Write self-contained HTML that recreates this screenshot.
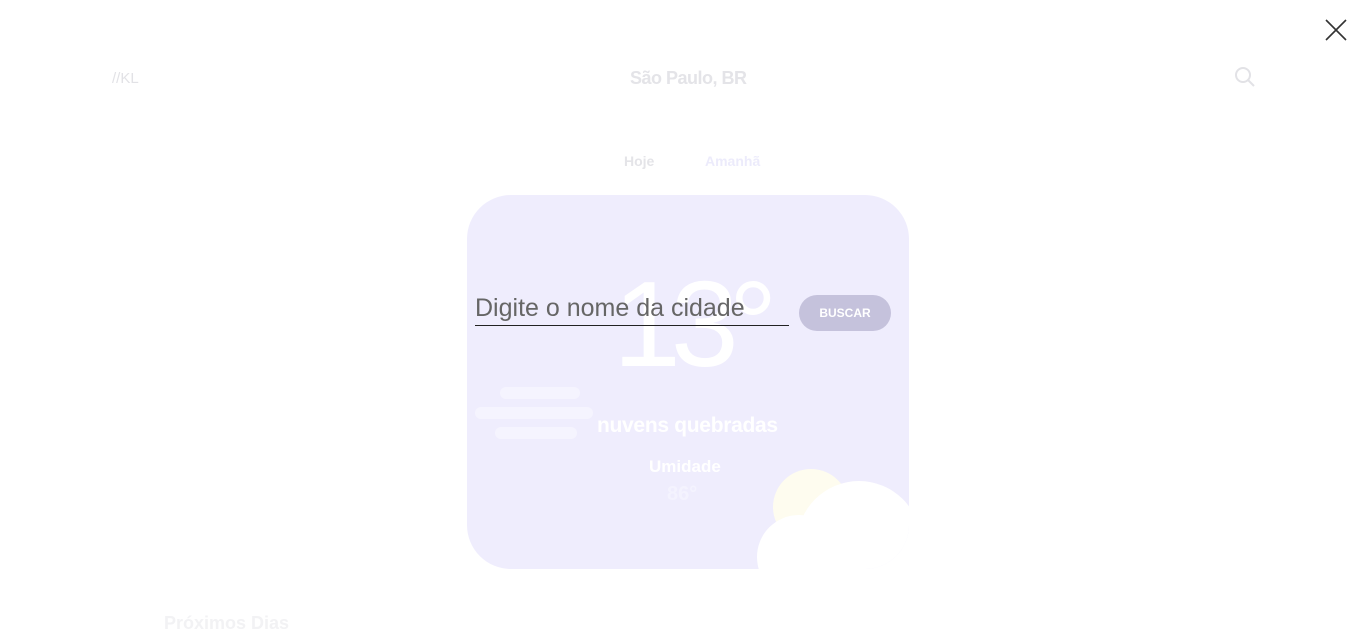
<!DOCTYPE html>
<html><head><meta charset="utf-8"><style>
body{margin:0;width:1366px;height:624px;overflow:hidden;background:#fff;font-family:"Liberation Sans",sans-serif;position:relative}
.a{position:absolute;white-space:nowrap}
</style></head><body>
<svg class="a" style="left:1325px;top:19px" width="22" height="22" viewBox="0 0 22 22"><path d="M1 1L21 21M21 1L1 21" stroke="#333" stroke-width="1.6"/></svg>
<div class="a" style="left:112px;top:70px;font-size:15px;color:#e2e2e6">//KL</div>
<div class="a" style="left:630px;top:68px;font-size:18px;font-weight:bold;color:#e4e4e8;letter-spacing:-0.5px">São Paulo, BR</div>
<svg class="a" style="left:1234px;top:66px" width="22" height="22" viewBox="0 0 22 22"><circle cx="9" cy="9" r="7" fill="none" stroke="#e2e2e6" stroke-width="2"/><path d="M14 14L20 20" stroke="#e2e2e6" stroke-width="2"/></svg>
<div class="a" style="left:624px;top:153px;font-size:14px;font-weight:bold;color:#e4e4e8">Hoje</div>
<div class="a" style="left:705px;top:153px;font-size:14px;font-weight:bold;color:#ecebfb">Amanhã</div>
<div class="a" style="left:467px;top:195px;width:442px;height:374px;background:#efedfd;border-radius:44px;overflow:hidden">
 <div class="a" style="left:146px;top:68px;font-size:122px;color:#fff;line-height:1;letter-spacing:-10px">13°</div>
 <div class="a" style="left:8px;top:192px;width:118px;height:56px">
  <div class="a" style="left:25px;top:0;width:80px;height:12px;background:#f5f4fe;border-radius:6px"></div>
  <div class="a" style="left:0;top:20px;width:118px;height:12px;background:#f5f4fe;border-radius:6px"></div>
  <div class="a" style="left:20px;top:40px;width:82px;height:12px;background:#f5f4fe;border-radius:6px"></div>
 </div>
 <div class="a" style="left:130px;top:219px;font-size:21px;font-weight:bold;color:#fff;letter-spacing:-0.3px">nuvens quebradas</div>
 <div class="a" style="left:182px;top:262px;font-size:17px;font-weight:bold;color:#fff">Umidade</div>
 <div class="a" style="left:200px;top:288px;font-size:20px;font-weight:bold;color:#f4f3fe">86°</div>
 <div class="a" style="left:306px;top:274px;width:76px;height:76px;border-radius:50%;background:#fefcef"></div>
 <div class="a" style="left:330px;top:286px;width:124px;height:124px;border-radius:50%;background:#fff"></div>
 <div class="a" style="left:290px;top:320px;width:84px;height:84px;border-radius:50%;background:#fff"></div>
</div>
<div class="a" style="left:475px;top:294px;font-size:25px;color:#666">Digite o nome da cidade</div>
<div class="a" style="left:475px;top:325px;width:314px;height:1px;background:#222"></div>
<div class="a" style="left:799px;top:295px;width:92px;height:36px;border-radius:18px;background:#c5c2dc;color:#fff;font-size:12px;font-weight:bold;text-align:center;line-height:36px">BUSCAR</div>
<div class="a" style="left:164px;top:613px;font-size:18px;font-weight:bold;color:#f2f2f4">Próximos Dias</div>
</body></html>
